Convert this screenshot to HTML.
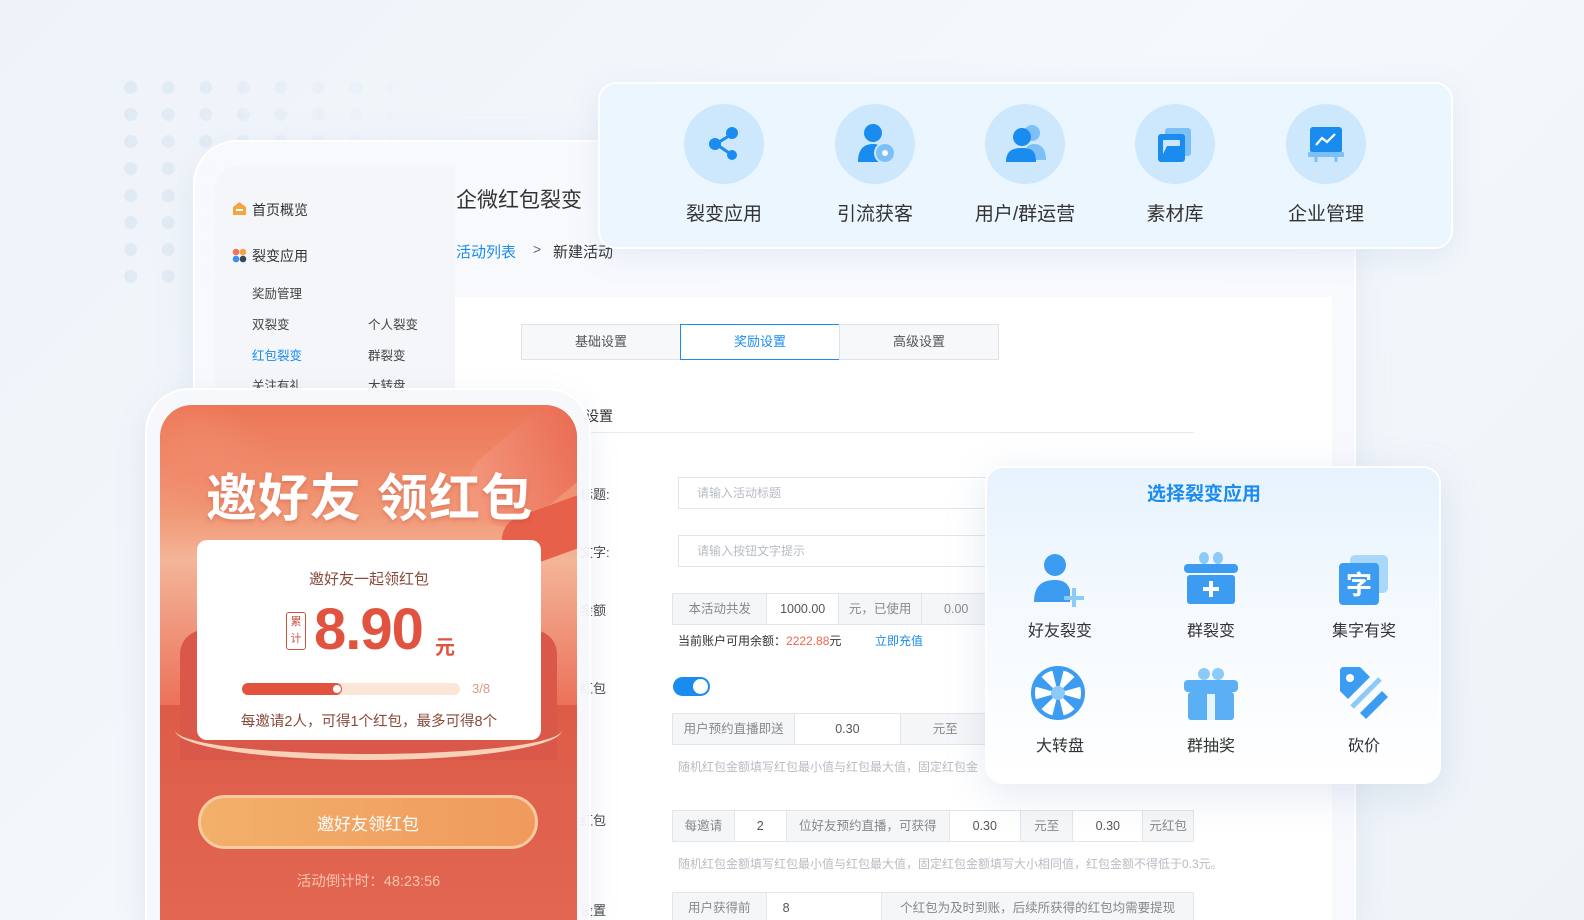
<!DOCTYPE html>
<html style="width:1584px;height:920px;overflow:hidden"><head><meta charset="utf-8">
<style>
*{box-sizing:border-box;margin:0;padding:0}
body{width:1584px;height:920px;overflow:hidden;position:relative;font-family:"Liberation Sans","Noto Sans CJK SC",sans-serif;background:linear-gradient(135deg,#eef3f9 0%,#f5f8fc 50%,#eef3f8 100%);color:#333}
.abs{position:absolute}
.dots{left:112px;top:74px;width:330px;height:210px;background-image:radial-gradient(circle,#dde8f3 6px,transparent 7px);background-size:37.5px 27px;opacity:.9;-webkit-mask-image:linear-gradient(90deg,#000,transparent)}
.main{left:193px;top:140px;width:1163px;height:780px;border-radius:44px 44px 0 0;border-bottom:0;background:rgba(248,250,253,.9);border:2px solid #fff;border-bottom:0;box-shadow:0 10px 40px rgba(150,170,200,.15)}
.side{left:215px;top:165px;width:240px;height:755px;background:#f4f6f9;border-radius:24px 0 0 0}
.content{left:455px;top:297px;width:877px;height:623px;background:#fff}
.t{position:absolute;white-space:nowrap}
.tab{position:absolute;top:324px;height:36px;border:1px solid #dfe3e8;background:#f7f8fa;font-size:13px;color:#555;text-align:center;line-height:34px}
.inp{position:absolute;height:32px;border:1px solid #e2e5ea;background:#fff;font-size:12px;color:#b7bcc4;line-height:30px;padding-left:18px}
.grp{position:absolute;height:32px;border:1px solid #e2e5ea;display:flex;font-size:12.5px;color:#555;line-height:30px;background:#fff;overflow:hidden}
.grp span{border-right:1px solid #e2e5ea;text-align:center}
.grp .g{background:#f5f6f8;color:#888}
.hint{position:absolute;font-size:12px;color:#b8bcc3;white-space:nowrap}
.lbl{position:absolute;font-size:13px;color:#444}
.topcard{left:598px;top:82px;width:855px;height:167px;border-radius:18px;background:#ecf6fe;border:2px solid #fff;box-shadow:0 8px 30px rgba(120,160,210,.15)}
.ic{position:absolute;width:80px;height:80px;border-radius:50%;background:#cde8fd;top:104px}
.icl{position:absolute;top:199px;font-size:19px;color:#333;width:150px;text-align:center}
.phone{left:145px;top:388px;width:446px;height:532px;border-radius:44px 44px 0 0;background:rgba(245,248,252,.95);border:2px solid #fff;border-bottom:0;box-shadow:0 10px 30px rgba(120,140,170,.15)}
.red{left:160px;top:405px;width:417px;height:515px;border-radius:32px 32px 0 0;background:linear-gradient(180deg,#ec7557 0%,#f19a78 22%,#f4b598 30%,#ea6e56 60%,#e46a54 100%);overflow:hidden}
.pop{left:985px;top:466px;width:456px;height:318px;border-radius:18px;background:linear-gradient(180deg,#e6f2fd 0%,#f3f9fe 40%,#fff 100%);border:2px solid #fff;box-shadow:0 10px 40px rgba(120,150,190,.2)}
.pl{position:absolute;font-size:16px;color:#333;width:120px;text-align:center}
</style></head><body>
<div class="abs dots"></div>
<div class="abs main"></div>
<div class="abs side"></div>
<div class="abs content"></div>

<svg class="abs" style="left:232px;top:201px" width="15" height="15"><path d="M1 6 L7.5 1 L14 6 V14 H1Z" fill="#f3a445"/><rect x="4" y="8" width="7" height="2" fill="#fff"/></svg>
<div class="t" style="left:252px;top:200px;font-size:14px;color:#333">首页概览</div>
<svg class="abs" style="left:232px;top:248px" width="15" height="15"><circle cx="4" cy="4" r="3.3" fill="#f0735a"/><circle cx="11" cy="4" r="3.3" fill="#f3a445"/><circle cx="4" cy="11" r="3.3" fill="#3a8ff0"/><circle cx="11" cy="11" r="3.3" fill="#35495e"/></svg>
<div class="t" style="left:252px;top:246px;font-size:14px;color:#333">裂变应用</div>
<div class="t" style="left:252px;top:283px;font-size:12.5px;color:#444">奖励管理</div>
<div class="t" style="left:252px;top:314px;font-size:12.5px;color:#444">双裂变</div>
<div class="t" style="left:368px;top:314px;font-size:12.5px;color:#444">个人裂变</div>
<div class="t" style="left:252px;top:345px;font-size:12.5px;color:#1a8cf0">红包裂变</div>
<div class="t" style="left:368px;top:345px;font-size:12.5px;color:#444">群裂变</div>
<div class="t" style="left:252px;top:375px;font-size:12.5px;color:#444">关注有礼</div>
<div class="t" style="left:368px;top:375px;font-size:12.5px;color:#444">大转盘</div>

<div class="t" style="left:456px;top:184px;font-size:21px;color:#333">企微红包裂变</div>
<div class="t" style="left:456px;top:241px;font-size:15px;color:#1a8cf0">活动列表</div>
<div class="t" style="left:533px;top:241px;font-size:14px;color:#666">&gt;</div>
<div class="t" style="left:553px;top:241px;font-size:15px;color:#333">新建活动</div>

<div class="tab" style="left:521px;width:160px">基础设置</div>
<div class="tab" style="left:680px;width:160px;border-color:#1a8cf0;background:#fff;color:#1a8cf0">奖励设置</div>
<div class="tab" style="left:839px;width:160px">高级设置</div>
<div class="t" style="left:585px;top:406px;font-size:14px;color:#333">设置</div>
<div class="abs" style="left:580px;top:432px;width:614px;height:1px;background:#e8eaee"></div>

<div class="lbl" style="left:580px;top:484px">标题:</div>
<div class="inp" style="left:678px;top:477px;width:320px">请输入活动标题</div>
<div class="lbl" style="left:580px;top:542px">文字:</div>
<div class="inp" style="left:678px;top:535px;width:320px">请输入按钮文字提示</div>
<div class="lbl" style="left:580px;top:600px">金额</div>
<div class="grp" style="left:672px;top:593px;width:320px"><span class="g" style="width:95px">本活动共发</span><span style="width:72px">1000.00</span><span class="g" style="width:84px">元，已使用</span><span class="g" style="width:69px">0.00</span></div>
<div class="t" style="left:678px;top:632px;font-size:12px;color:#333">当前账户可用余额：<span style="color:#f0644a">2222.88</span>元</div>
<div class="t" style="left:875px;top:632px;font-size:12px;color:#1a8cf0">立即充值</div>
<div class="lbl" style="left:580px;top:678px">红包</div>
<div class="abs" style="left:673px;top:677px;width:37px;height:19px;border-radius:10px;background:#1a8cf0"><div class="abs" style="left:20px;top:2px;width:15px;height:15px;border-radius:50%;background:#fff"></div></div>
<div class="grp" style="left:672px;top:713px;width:320px"><span class="g" style="width:123px">用户预约直播即送</span><span style="width:106px">0.30</span><span class="g" style="width:91px">元至</span></div>
<div class="hint" style="left:678px;top:758px">随机红包金额填写红包最小值与红包最大值，固定红包金</div>
<div class="lbl" style="left:580px;top:810px">红包</div>
<div class="grp" style="left:672px;top:810px;width:522px"><span class="g" style="width:62px">每邀请</span><span style="width:52px">2</span><span class="g" style="width:164px">位好友预约直播，可获得</span><span style="width:71px">0.30</span><span class="g" style="width:53px">元至</span><span style="width:70px">0.30</span><span class="g" style="width:50px;border:0">元红包</span></div>
<div class="hint" style="left:678px;top:855px">随机红包金额填写红包最小值与红包最大值，固定红包金额填写大小相同值，红包金额不得低于0.3元。</div>
<div class="lbl" style="left:580px;top:900px">设置</div>
<div class="grp" style="left:672px;top:892px;width:522px;height:28px;border-bottom:0"><span class="g" style="width:94px">用户获得前</span><span style="width:116px;text-align:left;padding-left:16px">8</span><span class="g" style="width:312px;border:0">个红包为及时到账，后续所获得的红包均需要提现</span></div>

<div class="abs topcard"></div>
<div class="ic" style="left:684px"></div>
<div class="ic" style="left:835px"></div>
<div class="ic" style="left:985px"></div>
<div class="ic" style="left:1135px"></div>
<div class="ic" style="left:1286px"></div>
<svg class="abs" style="left:704px;top:124px" width="40" height="40"><g stroke="#1a8cf0" stroke-width="3"><line x1="12" y1="20" x2="28" y2="10"/><line x1="12" y1="20" x2="28" y2="31"/></g><circle cx="28" cy="9" r="6" fill="#1a8cf0"/><circle cx="11" cy="20" r="6" fill="#1a8cf0"/><circle cx="28" cy="31" r="5" fill="#1a8cf0"/></svg>
<svg class="abs" style="left:853px;top:120px" width="46" height="46"><circle cx="20" cy="13" r="9" fill="#1a8cf0"/><path d="M5 42 C5 28 12 24 20 24 C28 24 33 28 33 42Z" fill="#1a8cf0"/><circle cx="32" cy="33" r="10" fill="#7cc0f7" stroke="#cde8fd" stroke-width="2"/><circle cx="32" cy="33" r="3" fill="#fff"/></svg>
<svg class="abs" style="left:1002px;top:120px" width="48" height="46"><circle cx="30" cy="13" r="8" fill="#7cc0f7"/><path d="M22 40 C22 28 26 24 32 24 C40 24 44 30 44 40Z" fill="#7cc0f7"/><circle cx="20" cy="17" r="9" fill="#1a8cf0"/><path d="M4 42 C4 31 10 28 20 28 C30 28 34 31 34 42Z" fill="#1a8cf0"/></svg>
<svg class="abs" style="left:1155px;top:124px" width="42" height="42"><rect x="10" y="4" width="26" height="28" rx="3" fill="#7cc0f7"/><rect x="3" y="10" width="27" height="28" rx="3" fill="#1a8cf0"/><rect x="8" y="16" width="17" height="6" rx="1" fill="#cde8fd"/><path d="M8 16 V30 L12 22Z" fill="#cde8fd"/></svg>
<svg class="abs" style="left:1305px;top:124px" width="42" height="42"><rect x="5" y="3" width="32" height="26" rx="3" fill="#1a8cf0"/><rect x="3" y="28" width="36" height="5" rx="1" fill="#7cc0f7"/><path d="M11 38 V33 M31 38 V33" stroke="#7cc0f7" stroke-width="3"/><polyline points="11,21 17,14 22,18 30,10" fill="none" stroke="#fff" stroke-width="2.2"/></svg>
<div class="icl" style="left:649px">裂变应用</div>
<div class="icl" style="left:800px">引流获客</div>
<div class="icl" style="left:950px">用户/群运营</div>
<div class="icl" style="left:1100px">素材库</div>
<div class="icl" style="left:1251px">企业管理</div>

<div class="abs phone"></div>
<div class="abs red">
  <div class="abs" style="left:-30px;top:0;width:160px;height:110px;border-radius:50%;background:radial-gradient(#f08a6a,transparent 70%);transform:rotate(30deg)"></div>
  <div class="abs" style="left:300px;top:20px;width:150px;height:80px;border-radius:40px;background:linear-gradient(120deg,#f6a085,#e55a44);transform:rotate(-40deg);opacity:.8"></div>
  <div class="abs" style="left:340px;top:100px;width:110px;height:50px;border-radius:25px;background:#e6604a;transform:rotate(-20deg)"></div>
  <div class="abs" style="left:-50px;top:300px;width:520px;height:300px;border-radius:30px;background:linear-gradient(180deg,#dd5c48,#e46a55)"></div>
  <div class="abs" style="left:20px;top:225px;width:377px;height:130px;border-radius:24px 24px 0 0;background:#d9584a"></div>
  <div class="abs" style="left:46px;top:52px;font-size:51px;font-weight:bold;color:#fff;letter-spacing:1px;text-shadow:0 2px 4px rgba(180,60,40,.3)">邀好友 领红包</div>
  <div class="abs" style="left:37px;top:135px;width:344px;height:200px;border-radius:10px;background:#fff"></div>
  <div class="abs" style="left:15px;top:325px;width:387px;height:30px;border-radius:0 0 50% 50%/0 0 100% 100%;border-bottom:6px solid #f7d2b8"></div>
  <div class="abs" style="left:37px;top:163px;width:344px;text-align:center;font-size:15px;color:#8a4a3a">邀好友一起领红包</div>
  <div class="abs" style="left:126px;top:207px;width:20px;height:38px;border:1px solid #c9553f;border-radius:3px;font-size:11px;color:#c9553f;text-align:center;line-height:17px;padding-top:1px">累<br>计</div>
  <div class="abs" style="left:154px;top:191px;font-size:58px;font-weight:bold;color:#e2533f;letter-spacing:-1px">8.90</div>
  <div class="abs" style="left:275px;top:226px;font-size:20px;font-weight:bold;color:#e2533f">元</div>
  <div class="abs" style="left:82px;top:278px;width:218px;height:12px;border-radius:6px;background:#fbe6d8"></div>
  <div class="abs" style="left:82px;top:278px;width:100px;height:12px;border-radius:6px;background:#e2533f"></div>
  <div class="abs" style="left:173px;top:280px;width:8px;height:8px;border-radius:50%;background:#fff"></div>
  <div class="abs" style="left:312px;top:276px;font-size:13px;color:#d99a86">3/8</div>
  <div class="abs" style="left:37px;top:305px;width:344px;text-align:center;font-size:14.5px;color:#8a4a3a">每邀请2人，可得1个红包，最多可得8个</div>
  <div class="abs" style="left:38px;top:390px;width:340px;height:54px;border-radius:27px;background:linear-gradient(90deg,#f2b06a,#f09a5e);border:3px solid #f8cba0"></div>
  <div class="abs" style="left:38px;top:405px;width:340px;text-align:center;font-size:17px;color:#fff">邀好友领红包</div>
  <div class="abs" style="left:0;top:465px;width:417px;text-align:center;font-size:14.5px;color:#f9c2ac">活动倒计时：48:23:56</div>
</div>

<div class="abs pop"></div>
<div class="t" style="left:1147px;top:479px;font-size:19px;font-weight:bold;color:#1a8cf0">选择裂变应用</div>
<svg class="abs" style="left:1030px;top:552px" width="60" height="55"><circle cx="25" cy="13" r="11" fill="#3c9cf2"/><path d="M4 50 C4 32 14 28 25 28 C33 28 38 31 40 38 V50Z" fill="#3c9cf2"/><path d="M44 36 V56 M34 46 H54" stroke="#8ccaf8" stroke-width="4"/></svg>
<svg class="abs" style="left:1183px;top:552px" width="56" height="56"><ellipse cx="21" cy="6" rx="5" ry="6" fill="#8ccaf8"/><ellipse cx="35" cy="6" rx="5" ry="6" fill="#8ccaf8"/><rect x="1" y="12" width="54" height="9" rx="4" fill="#3c9cf2"/><rect x="4" y="23" width="48" height="29" rx="3" fill="#3c9cf2"/><path d="M28 29 V45 M20 37 H36" stroke="#fff" stroke-width="4"/></svg>
<svg class="abs" style="left:1336px;top:555px" width="56" height="52"><rect x="14" y="0" width="38" height="38" rx="5" fill="#a9d8fb"/><rect x="3" y="8" width="40" height="42" rx="4" fill="#3c9cf2"/><text x="23" y="39" font-size="26" font-weight="bold" fill="#fff" text-anchor="middle" font-family="Noto Sans CJK SC">字</text></svg>
<div class="pl" style="left:1000px;top:617px">好友裂变</div>
<div class="pl" style="left:1151px;top:617px">群裂变</div>
<div class="pl" style="left:1304px;top:617px">集字有奖</div>
<svg class="abs" style="left:1030px;top:665px" width="56" height="56"><circle cx="28" cy="28" r="25" fill="#fff" stroke="#3c9cf2" stroke-width="4"/><g fill="#3c9cf2"><path d="M28 28 L22 4 H34Z"/><path d="M28 28 L22 4 H34Z" transform="rotate(60 28 28)"/><path d="M28 28 L22 4 H34Z" transform="rotate(120 28 28)"/><path d="M28 28 L22 4 H34Z" transform="rotate(180 28 28)"/><path d="M28 28 L22 4 H34Z" transform="rotate(240 28 28)"/><path d="M28 28 L22 4 H34Z" transform="rotate(300 28 28)"/></g><circle cx="28" cy="28" r="7" fill="#8ccaf8"/></svg>
<svg class="abs" style="left:1183px;top:668px" width="56" height="54"><ellipse cx="21" cy="6" rx="6" ry="6" fill="#8ccaf8"/><ellipse cx="35" cy="6" rx="6" ry="6" fill="#8ccaf8"/><rect x="1" y="12" width="54" height="12" rx="4" fill="#5aaff5"/><rect x="5" y="24" width="46" height="28" rx="3" fill="#5aaff5"/><rect x="24" y="26" width="8" height="26" fill="#e8f4fe"/></svg>
<svg class="abs" style="left:1336px;top:665px" width="58" height="58"><path d="M4 6 Q4 2 8 2 H24 L34 12 L12 34 L4 26Z" fill="#3c9cf2"/><circle cx="14" cy="13" r="4" fill="#fff"/><path d="M16 42 L44 14" stroke="#8ccaf8" stroke-width="5"/><path d="M24 48 L46 26 L52 32 L30 54Z" fill="#3c9cf2"/></svg>
<div class="pl" style="left:1000px;top:732px">大转盘</div>
<div class="pl" style="left:1151px;top:732px">群抽奖</div>
<div class="pl" style="left:1304px;top:732px">砍价</div>
</body></html>
